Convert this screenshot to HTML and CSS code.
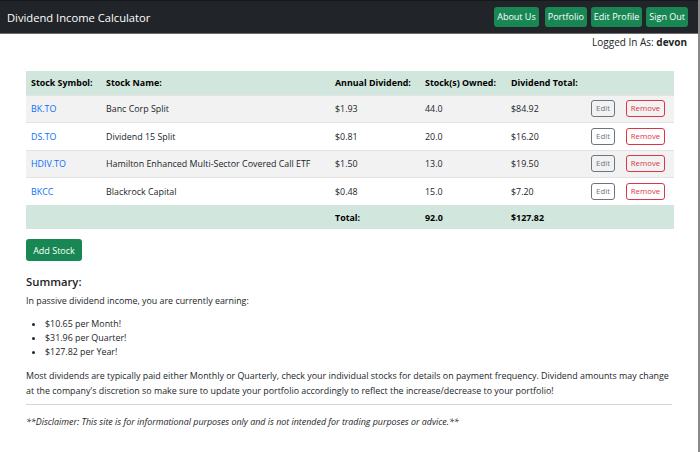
FILE: index.html
```html
<!DOCTYPE html>
<html>
<head>
<meta charset="utf-8">
<title>Dividend Income Calculator</title>
<link rel="stylesheet" href="styles.css">
</head>
<body>
<div class="page">
  <nav class="navbar">
    <span class="brand">Dividend Income Calculator</span>
    <div class="nav-buttons">
      <a class="btn-nav">About Us</a>
      <a class="btn-nav">Portfolio</a>
      <a class="btn-nav">Edit Profile</a>
      <a class="btn-nav">Sign Out</a>
    </div>
  </nav>
  <div class="logged">Logged In As: <b>devon</b></div>
  <main class="content">
    <table class="stocks">
      <thead>
        <tr>
          <th class="c-sym">Stock Symbol:</th>
          <th class="c-name">Stock Name:</th>
          <th class="c-ann">Annual Dividend:</th>
          <th class="c-own">Stock(s) Owned:</th>
          <th class="c-tot">Dividend Total:</th>
          <th class="c-edit"></th>
          <th class="c-rem"></th>
        </tr>
      </thead>
      <tbody>
        <tr class="odd">
          <td><a class="sym">BK.TO</a></td><td>Banc Corp Split</td><td>$1.93</td><td>44.0</td><td>$84.92</td>
          <td><span class="btn-sm edit">Edit</span></td><td><span class="btn-sm remove">Remove</span></td>
        </tr>
        <tr>
          <td><a class="sym">DS.TO</a></td><td>Dividend 15 Split</td><td>$0.81</td><td>20.0</td><td>$16.20</td>
          <td><span class="btn-sm edit">Edit</span></td><td><span class="btn-sm remove">Remove</span></td>
        </tr>
        <tr class="odd">
          <td><a class="sym">HDIV.TO</a></td><td>Hamilton Enhanced Multi-Sector Covered Call ETF</td><td>$1.50</td><td>13.0</td><td>$19.50</td>
          <td><span class="btn-sm edit">Edit</span></td><td><span class="btn-sm remove">Remove</span></td>
        </tr>
        <tr>
          <td><a class="sym">BKCC</a></td><td>Blackrock Capital</td><td>$0.48</td><td>15.0</td><td>$7.20</td>
          <td><span class="btn-sm edit">Edit</span></td><td><span class="btn-sm remove">Remove</span></td>
        </tr>
      </tbody>
      <tfoot>
        <tr>
          <td></td><td></td><th>Total:</th><th>92.0</th><th>$127.82</th><td></td><td></td>
        </tr>
      </tfoot>
    </table>
    <button class="btn-add">Add Stock</button>
    <h2 class="summary">Summary:</h2>
    <p class="intro">In passive dividend income, you are currently earning:</p>
    <ul class="earn">
      <li>$10.65 per Month!</li>
      <li>$31.96 per Quarter!</li>
      <li>$127.82 per Year!</li>
    </ul>
    <p class="note">Most dividends are typically paid either Monthly or Quarterly, check your individual stocks for details on payment frequency. Dividend amounts may change at the company's discretion so make sure to update your portfolio accordingly to reflect the increase/decrease to your portfolio!</p>
    <hr class="rule">
    <p class="disclaimer">**Disclaimer: This site is for informational purposes only and is not intended for trading purposes or advice.**</p>
  </main>
</div>
</body>
</html>
```
FILE: styles.css
```css
* { box-sizing: border-box; }
html, body { margin: 0; padding: 0; background: #fff; }
body {
  font-family: "Open Sans", "Noto Sans", sans-serif;
  font-size: 8.9px;
  color: #212529;
}
.page {
  width: 700px;
  min-height: 452px;
  border-right: 2px solid #8a8a8a;
}
.navbar {
  height: 34px;
  background: #212529;
  border-top: 1px solid #16181b;
  border-bottom: 1px solid #6b6d70;
  display: flex;
  align-items: center;
  justify-content: space-between;
  padding: 0 10px 0 7px;
}
.brand {
  color: #fff;
  font-size: 11.2px;
}
.nav-buttons { display: flex; gap: 4px; }
.btn-nav {
  background: #198754;
  color: #fff;
  font-size: 9px;
  border-radius: 3px;
  height: 20px;
  line-height: 20px;
  padding: 0 3px;
}
.btn-nav:first-child { margin-right: 2px; }
.logged {
  text-align: right;
  padding: 1px 11px 0 0;
  height: 14px;
  line-height: 14px;
  font-size: 10px;
}
.content { padding: 23px 26px 0 26px; }
.stocks {
  width: 648px;
  border-collapse: collapse;
  table-layout: fixed;
}
.stocks th, .stocks td {
  text-align: left;
  padding: 0 0 0 5px;
  white-space: nowrap;
  vertical-align: middle;
}
.stocks thead tr { background: #d1e7dd; height: 24px; }
.stocks thead th { font-weight: 700; color: #000; }
.stocks tbody tr { height: 27.5px; border-top: 1px solid #e3e3e3; }
.stocks tbody tr.odd { background: #f2f2f2; }
.stocks tfoot tr { background: #d1e7dd; height: 24px; }
.stocks tfoot th { font-weight: 700; color: #000; }
.c-sym { width: 75px; }
.c-name { width: 229px; }
.c-ann { width: 90px; }
.c-own { width: 86px; }
.c-tot { width: 80px; }
.c-edit { width: 35px; }
.c-rem { width: 53px; }
.sym { color: #0d6efd; }
.btn-sm {
  display: inline-block;
  font-size: 7.8px;
  height: 17px;
  line-height: 15px;
  border-radius: 3px;
  border: 1px solid;
  text-align: center;
}
.edit { color: #6c757d; border-color: #6c757d; width: 24px; }
.remove { color: #dc3545; border-color: #dc3545; width: 39px; }
.btn-add {
  margin-top: 10px;
  background: #198754;
  color: #fff;
  border: 0;
  border-radius: 3px;
  font-family: inherit;
  font-size: 9px;
  height: 22px;
  width: 56px;
  padding: 0;
}
.summary {
  font-size: 11.3px;
  font-weight: 600;
  margin: 13px 0 0 0;
  line-height: 16px;
}
.intro { margin: 3px 0 0 0; line-height: 15px; }
.earn {
  margin: 9px 0 0 0;
  padding-left: 19px;
  line-height: 14px;
}
.note {
  margin: 9px 0 0 0;
  line-height: 15px;
}
.rule {
  margin: 6px 0 0 0;
  border: 0;
  border-top: 1px solid #d6d6d6;
}
.disclaimer {
  font-style: italic;
  margin: 10px 0 0 0;
  line-height: 14px;
}
```
